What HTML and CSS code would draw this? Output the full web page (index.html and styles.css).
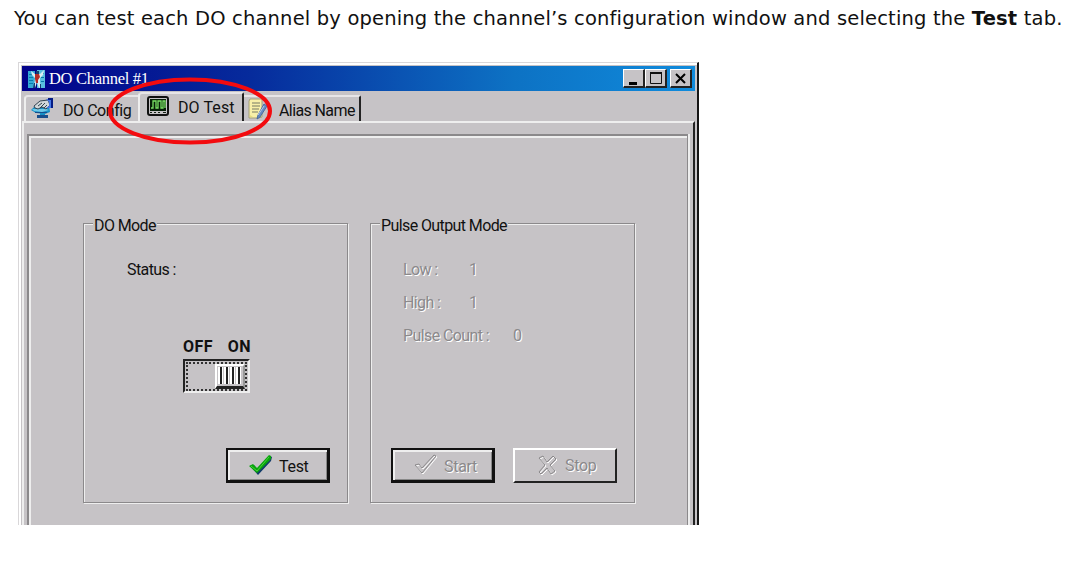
FILE: index.html
```html
<!DOCTYPE html>
<html lang="en">
<head>
<meta charset="utf-8">
<title>DO Channel #1</title>
<link rel="stylesheet" href="styles.css">
</head>
<body>
<p class="intro">You can test each DO channel by opening the channel’s configuration window and selecting the <b>Test</b> tab.</p>
<main class="window">
  <header class="titlebar">
    <svg class="app-icon" width="19" height="20" viewBox="0 0 19 20"><path fill="#35a9d5" d="M1 2h7v17H1z"/><path fill="#087bab" d="M2 5h4v1H2zm0 3h4v1H2zm0 3h4v1H2zm0 3h4v1H2z"/><path fill="#58bfe0" d="M10 1h8v18h-8z"/><path fill="#087bab" d="M14 4h3v1h-3zm0 4h3v1h-3zm0 4h3v1h-3z"/><path fill="#d8eef2" d="M4 2l4 3 5 0 4-4-1 5-3 3v4l1 5-2 1-2-6-2 6H7l1-10-3-3z"/><path fill="#b62d28" d="M8 5h4l1 3-2 3v3H9l-1-4z"/><path fill="#173e70" d="M9 2h3v3H9zM7 14h1v5H6zm6 1h1v4h-1z"/></svg>
    <h1 class="title">DO Channel #1</h1>
    <div class="controls">
      <span class="control"><svg width="22" height="19" viewBox="0 0 22 19"><path fill="#000" d="M6 13h8v3H6z"/></svg></span>
      <span class="control"><svg width="22" height="19" viewBox="0 0 22 19"><path fill="none" stroke="#111" d="M5.5 4.5h11v10h-11z"/><path fill="#111" d="M5 3h12v2H5z"/></svg></span>
      <span class="control close"><svg width="22" height="19" viewBox="0 0 22 19"><path stroke="#000" stroke-width="2" d="M6 5l9 9M15 5l-9 9"/></svg></span>
    </div>
  </header>
  <nav class="tabs">
    <div class="tab config">
      <svg width="24" height="22" viewBox="0 0 24 22"><path fill="#168fc5" d="M0 12l5-5h13l1 7-5 2-9-1zM9 14h5v5H9z"/><path fill="#70c9e8" d="M1 11h14l3 1-7 2-8-1z"/><path fill="#174e8c" d="M6 17h11v3H6zM4 14h12v1H4z"/><path fill="#d1d7da" stroke="#344552" d="M3 8l6-5 8-1 2 5-4 4-4-2-4 2-3-1z"/><path stroke="#334650" d="M7 8l4-3m-2 5l5-5m-1 5l3-3" fill="none"/><path fill="#4778e5" d="M15 1h6v9h-6l3-2V4z"/><path fill="#061c86" d="M17 0h5v10h-2V2h-3z"/></svg>
      <span class="tab-label">DO Config</span>
    </div>
    <div class="tab test">
      <svg width="23" height="20" viewBox="0 0 23 20"><rect x="1" y="1" width="20" height="18" rx="2" fill="#c6c3c6" stroke="#111" stroke-width="2"/><path fill="#061e07" d="M3 3h16v12H3z"/><path fill="none" stroke="#79df65" stroke-width="1.3" d="M4 12h2V5h3v7h2V5h3v7h2V5h2v7"/><path fill="#142214" d="M3 16h2v1H3zm4 0h2v1H7zm4 0h2v1h-2zm5 0h3v1h-3z"/></svg>
      <span class="tab-label">DO Test</span>
    </div>
    <div class="tab alias">
      <svg width="22" height="22" viewBox="0 0 22 22"><path fill="#f8f0a8" stroke="#a5a078" d="M3 1h12v18l-3 1H2V3z"/><path stroke="#777b65" d="M5 5h8M5 8h8M5 11h7M5 14h6"/><path fill="#e8de80" d="M3 17l3 2H3z"/><path fill="#688cc4" stroke="#496ba0" d="M17 6l3 2-7 11-3 2 1-4z"/><path stroke="#b9ccec" d="M17 8l-6 9"/></svg>
      <span class="tab-label">Alias Name</span>
    </div>
  </nav>
  <section class="page">
    <div class="panel">
      <section class="group">
        <h2 class="legend">DO Mode</h2>
        <div class="status">Status :</div>
        <div class="switch-block">
          <div class="switch-labels"><b>OFF</b><b>ON</b></div>
          <div class="switch"><div class="track"><div class="thumb"><i></i><i></i><i></i><i></i></div></div></div>
        </div>
        <div class="actions do-actions">
          <button class="button default"><svg width="25" height="24" viewBox="0 0 25 24"><path fill="#123c69" d="M2 13l4-1 4 5L22 3l2 1-1 4L10 22z"/><path fill="#08a50d" d="M1 13l4-2 4 4L21 2l2 1v3L9 20z"/><path fill="none" stroke="#49d339" d="M3 13l6 5L21 4"/></svg><span>Test</span></button>
        </div>
      </section>
      <section class="group">
        <h2 class="legend">Pulse Output Mode</h2>
        <dl class="values">
          <div class="value-row"><dt>Low :</dt><dd>1</dd></div>
          <div class="value-row"><dt>High :</dt><dd>1</dd></div>
          <div class="value-row count"><dt>Pulse Count :</dt><dd>0</dd></div>
        </dl>
        <div class="actions">
          <button class="button default" disabled><svg width="25" height="24" viewBox="0 0 25 24"><g fill="none"><path stroke="#fff" d="M3 13l4-1 3 4L22 3l2 1L10 21z"/><path stroke="#8b898b" d="M2 12l4-1 3 4L21 2l2 1L9 20z"/></g></svg><span>Start</span></button>
          <button class="button stop" disabled><svg width="22" height="24" viewBox="0 0 22 24"><g fill="none"><path stroke="#fff" d="M3 5l4-2 4 6 6-6 3 3-6 6 5 6-4 3-4-6-6 6-2-2 6-7z"/><path stroke="#8b898b" d="M2 4l4-2 4 6 6-6 3 3-6 6 5 6-4 3-4-6-6 6-2-2 6-7z"/></g></svg><span>Stop</span></button>
        </div>
      </section>
    </div>
  </section>
  <svg class="highlight" width="166" height="70" viewBox="0 0 166 70"><ellipse cx="83" cy="35" rx="80" ry="31.5" fill="none" stroke="#f30b0f" stroke-width="4"/></svg>
</main>
</body>
</html>
```
FILE: styles.css
```css
* { box-sizing: border-box; }
body {
  margin: 0;
  background: #fff;
  color: #111;
  font: 16px/20px Roboto, sans-serif;
  letter-spacing: -.6px;
}
.intro {
  margin: 0;
  padding: 8px 0 0 14px;
  height: 62px;
  font: 19.5px/22px "DejaVu Sans", sans-serif;
  letter-spacing: .17px;
  white-space: nowrap;
}
.window {
  position: relative;
  width: 681px;
  height: 463px;
  padding: 3px 2px 0 3px;
  margin-left: 18px;
  background: #c6c3c6;
  border: solid #d9d7d9;
  border-width: 1px 2px 0 1px;
  border-right-color: #151515;
  box-shadow: inset 2px 2px #fff;
  overflow: hidden;
}
.titlebar {
  height: 25px;
  display: flex;
  align-items: center;
  padding: 0 3px 0 5px;
  background: linear-gradient(90deg, #02028a, #062b9c 34%, #0d72c4 73%, #108bdc);
}
.app-icon { margin-right: 3px; }
.title {
  margin: 0;
  color: #fff;
  font: 16.5px/23px "Liberation Serif", serif;
  letter-spacing: -.3px;
}
.controls { display: flex; margin-left: auto; }
.control {
  width: 22px;
  height: 19px;
  background: #c6c3c6;
  border: 1px solid #fff;
  border-right: 2px solid #222;
  border-bottom: 2px solid #222;
  overflow: hidden;
}
.control svg { display: block; margin: -1px; }
.close { margin-left: 3px; }
.tabs { height: 30px; display: flex; align-items: flex-end; padding-left: 2px; }
.tab {
  display: flex;
  align-items: center;
  height: 26px;
  border-top: 2px solid #e7e5e7;
  white-space: nowrap;
}
.tab-label { padding-top: 4px; }
.config { width: 114px; padding-left: 5px; gap: 8px; border-left: 2px solid #eee; border-radius: 4px 0 0; }
.config .tab-label { letter-spacing: -.45px; }
.test { width: 106px; height: 29px; padding: 0 0 3px 7px; gap: 8px; border-left: 2px solid #eee; border-right: 2px solid #222; border-radius: 4px 2px 0 0; }
.test .tab-label { letter-spacing: .1px; }
.alias { width: 117px; padding-left: 3px; gap: 10px; border-right: 2px solid #222; border-radius: 0 2px 0 0; }
.page {
  height: 404px;
  padding: 11px 5px 0 3px;
  border: 2px solid #eee;
  border-right-color: #222;
  border-bottom: 0;
}
.panel {
  display: flex;
  gap: 22px;
  height: 391px;
  padding: 87px 0 0 54px;
  border: solid #8b898b;
  border-width: 2px 1px 0 2px;
  box-shadow: inset 2px 2px #eee, 2px 0 #eee;
}
.group {
  display: flex;
  flex-direction: column;
  width: 265px;
  height: 280px;
  border: 1px solid #8b898b;
  box-shadow: inset 1px 1px #eee, 1px 1px #eee;
}
.legend {
  align-self: flex-start;
  margin: -8px 0 0 9px;
  padding: 0 1px;
  height: 20px;
  background: #c6c3c6;
  font: inherit;
}
.status { margin: 24px 0 0 43px; }
.switch-block { width: 68px; margin: 57px 0 0 99px; }
.switch-labels { display: flex; justify-content: space-between; height: 22px; letter-spacing: .5px; }
.switch {
  width: 67px;
  height: 34px;
  padding: 1px;
  border: 2px solid #222;
  border-right-color: #eee;
  border-bottom-color: #eee;
}
.track { height: 29px; display: flex; justify-content: flex-end; border: 2px dotted #333; }
.thumb {
  display: flex;
  justify-content: center;
  gap: 4px;
  width: 30px;
  height: 25px;
  padding-top: 1px;
  border: 2px solid #fff;
  border-right-color: #999;
  border-bottom: 3px solid #222;
}
.thumb i { width: 2px; height: 17px; background: #222; box-shadow: -2px 0 #fff, 1px 0 #fff; }
.actions { display: flex; gap: 18px; margin: auto 0 19px 20px; }
.do-actions { margin-left: 142px; }
.button {
  display: flex;
  align-items: center;
  width: 104px;
  height: 35px;
  margin: 0;
  padding: 0 0 0 20px;
  gap: 6px;
  background: #c6c3c6;
  border: 2px solid #fff;
  border-right-color: #222;
  border-bottom-color: #222;
  border-radius: 0;
  color: #111;
  font: inherit;
  letter-spacing: -.3px;
}
.button span { padding-top: 3px; }
.stop { padding-left: 22px; }
.stop span { padding-top: 1px; }
.default { border-color: #111; border-right-width: 3px; border-bottom-width: 3px; box-shadow: inset 2px 2px #eee, inset -1px -1px #888; }
.button:disabled, .values { color: #8b898b; text-shadow: 1px 1px #fff; }
.values { margin: 24px 0 0 32px; }
.value-row { display: flex; height: 33px; }
dt { width: 66px; }
dd { margin: 0; }
.count dt { width: 110px; }
.highlight { position: absolute; left: 88px; top: 13px; }
```
